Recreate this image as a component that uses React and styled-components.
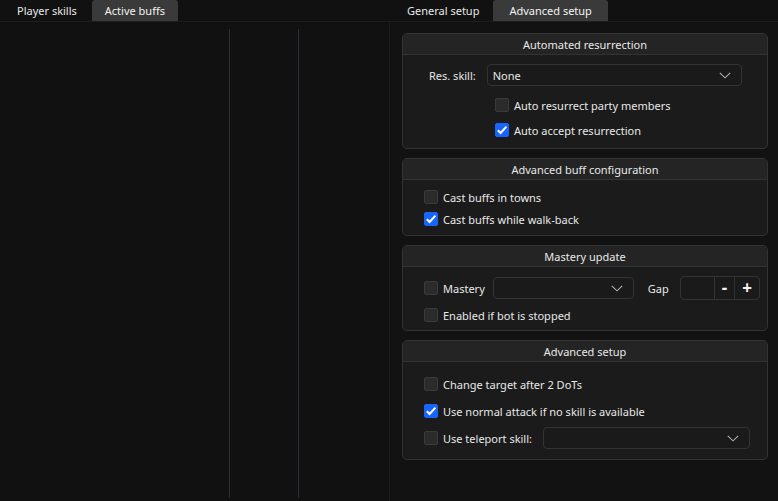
import React from "react";
import styled, { createGlobalStyle } from "styled-components";

const Global = createGlobalStyle`
  html, body {
    margin: 0;
    padding: 0;
    background: #111111;
  }
  body {
    font-family: "Noto Sans", "Open Sans", sans-serif;
    font-size: 11px;
    color: #e8e8e8;
  }
`;

const Page = styled.div`
  width: 778px;
  height: 501px;
  display: flex;
  background: #111111;
  overflow: hidden;
`;

const Pane = styled.div`
  width: ${(p) => p.width}px;
  display: flex;
  flex-direction: column;
`;

const TabBar = styled.div`
  height: 21px;
  display: flex;
  align-items: stretch;
  padding-left: ${(p) => p.pad}px;
  border-bottom: 1px solid #1d1d1d;
`;

const Tab = styled.div`
  display: flex;
  align-items: center;
  padding: 0 ${(p) => p.px}px;
  background: ${(p) => (p.active ? "#3a3a3a" : "transparent")};
  border-radius: 3px 3px 0 0;
  color: ${(p) => (p.active ? "#f2f2f2" : "#e8e8e8")};
  margin-right: ${(p) => p.mr || 0}px;
  line-height: 1;
`;

const Table = styled.div`
  flex: 1;
  display: grid;
  grid-template-columns: 230px 69px 1fr;
  padding: 7px 0 3px;
`;

const Col = styled.div`
  border-right: ${(p) => (p.line ? "1px solid #2a3038" : "none")};
`;

const Content = styled.div`
  flex: 1;
  display: flex;
  flex-direction: column;
  gap: 9px;
  padding: 11px 10px 0 12px;
  border-left: 1px solid #1c1c1c;
  background: #121212;
`;

const Group = styled.div`
  border: 1px solid #333333;
  border-radius: 5px;
  background: #1b1b1b;
  overflow: hidden;
`;

const GroupTitle = styled.div`
  height: 20px;
  display: flex;
  align-items: center;
  justify-content: center;
  background: #242424;
  border-bottom: 1px solid #333333;
  color: #e8e8e8;
`;

const GroupBody = styled.div`
  display: flex;
  flex-direction: column;
  gap: ${(p) => p.gap}px;
  padding: ${(p) => p.pad};
`;

const Row = styled.div`
  height: ${(p) => p.h || 22}px;
  display: flex;
  align-items: center;
  margin-left: ${(p) => p.indent || 0}px;
  margin-top: ${(p) => p.mt || 0}px;
`;

const Label = styled.span`
  margin-right: ${(p) => p.mr || 0}px;
  white-space: nowrap;
`;

const Box = styled.span`
  width: 14px;
  height: 14px;
  box-sizing: border-box;
  border-radius: 2px;
  border: 1px solid ${(p) => (p.checked ? "#1864ff" : "#3a3a3a")};
  background: ${(p) => (p.checked ? "#1864ff" : "#2b2b2b")};
  display: flex;
  align-items: center;
  justify-content: center;
  margin-right: 5px;
  flex: none;
`;

const Check = ({ label, checked, mr }) => (
  <>
    <Box checked={checked}>
      {checked && (
        <svg width="12" height="12" viewBox="0 0 12 12">
          <path d="M1.8 6.2 L4.6 9 L10.4 2.6" fill="none" stroke="#fff" strokeWidth="2" />
        </svg>
      )}
    </Box>
    <Label mr={mr}>{label}</Label>
  </>
);

const Combo = styled.div`
  height: 22px;
  box-sizing: border-box;
  width: ${(p) => (p.w ? `${p.w}px` : "auto")};
  flex: ${(p) => (p.w ? "none" : "1")};
  border: 1px solid #333333;
  border-radius: 4px;
  background: #1a1a1a;
  display: flex;
  align-items: center;
  justify-content: space-between;
  padding: 0 10px 0 5px;
  margin-right: ${(p) => p.mr || 0}px;
`;

const Chevron = () => (
  <svg width="12" height="7" viewBox="0 0 12 7">
    <path d="M0.8 0.8 L6 5.8 L11.2 0.8" fill="none" stroke="#b0b0b0" strokeWidth="1.1" />
  </svg>
);

const Spin = styled.div`
  width: 80px;
  height: 24px;
  box-sizing: border-box;
  border: 1px solid #333333;
  border-radius: 4px;
  background: #1a1a1a;
  display: flex;
`;

const SpinField = styled.div`
  width: 34px;
  border-right: 1px solid #333333;
`;

const SpinBtn = styled.div`
  width: ${(p) => p.w}px;
  display: flex;
  align-items: center;
  justify-content: center;
  border-right: ${(p) => (p.last ? "none" : "1px solid #333333")};
  font-size: 17px;
  font-weight: 700;
  color: #f2f2f2;
  line-height: 1;
  padding-bottom: 2px;
`;

export default function App() {
  return (
    <Page>
      <Global />
      <Pane width={389}>
        <TabBar pad={5}>
          <Tab px={12} mr={3}>Player skills</Tab>
          <Tab px={13} active>Active buffs</Tab>
        </TabBar>
        <Table>
          <Col line />
          <Col line />
          <Col />
        </Table>
      </Pane>
      <Pane width={389}>
        <TabBar pad={6}>
          <Tab px={12} mr={2}>General setup</Tab>
          <Tab px={16} active>Advanced setup</Tab>
        </TabBar>
        <Content>
          <Group>
            <GroupTitle>Automated resurrection</GroupTitle>
            <GroupBody pad="9px 25px 7px 26px" gap={3}>
              <Row>
                <Label mr={11}>Res. skill:</Label>
                <Combo>
                  <span>None</span>
                  <Chevron />
                </Combo>
              </Row>
              <Row indent={66} mt={5}>
                <Check label="Auto resurrect party members" />
              </Row>
              <Row indent={66}>
                <Check label="Auto accept resurrection" checked />
              </Row>
            </GroupBody>
          </Group>
          <Group>
            <GroupTitle>Advanced buff configuration</GroupTitle>
            <GroupBody pad="6px 21px 5px 21px" gap={0}>
              <Row>
                <Check label="Cast buffs in towns" />
              </Row>
              <Row>
                <Check label="Cast buffs while walk-back" checked />
              </Row>
            </GroupBody>
          </Group>
          <Group>
            <GroupTitle>Mastery update</GroupTitle>
            <GroupBody pad="9px 9px 4px 21px" gap={4}>
              <Row h={24}>
                <Check label="Mastery" mr={8} />
                <Combo w={141} mr={14}>
                  <span />
                  <Chevron />
                </Combo>
                <Label mr={11}>Gap</Label>
                <Spin>
                  <SpinField />
                  <SpinBtn w={20}>-</SpinBtn>
                  <SpinBtn w={24} last>+</SpinBtn>
                </Spin>
              </Row>
              <Row>
                <Check label="Enabled if bot is stopped" />
              </Row>
            </GroupBody>
          </Group>
          <Group>
            <GroupTitle>Advanced setup</GroupTitle>
            <GroupBody pad="11px 17px 10px 21px" gap={5}>
              <Row>
                <Check label="Change target after 2 DoTs" />
              </Row>
              <Row>
                <Check label="Use normal attack if no skill is available" checked />
              </Row>
              <Row>
                <Check label="Use teleport skill:" mr={11} />
                <Combo>
                  <span />
                  <Chevron />
                </Combo>
              </Row>
            </GroupBody>
          </Group>
        </Content>
      </Pane>
    </Page>
  );
}
